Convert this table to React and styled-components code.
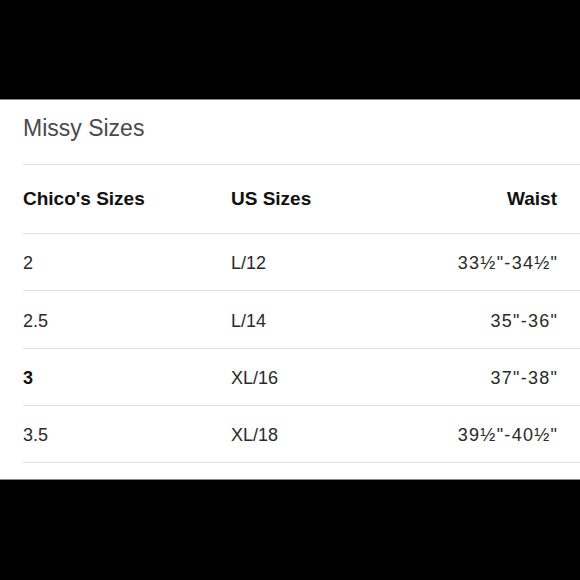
import styled, { createGlobalStyle } from "styled-components";

const GlobalStyle = createGlobalStyle`
  html, body {
    margin: 0;
    padding: 0;
    background: #000;
  }
  body {
    font-family: "Liberation Sans", Arial, sans-serif;
  }
`;

const Page = styled.div`
  width: 580px;
  height: 580px;
  display: flex;
  flex-direction: column;
  background: #000;
`;

const Panel = styled.div`
  margin-top: 99px;
  height: 381px;
  box-sizing: border-box;
  background: #fff;
  border-top: 1px solid #8a8a8a;
  border-bottom: 1px solid #8a8a8a;
  padding-left: 23px;
`;

const Title = styled.div`
  height: 65px;
  box-sizing: border-box;
  display: flex;
  align-items: center;
  padding-bottom: 8px;
  border-bottom: 1px solid #dedede;
  font-size: 23px;
  color: #4a4a4a;
`;

const Row = styled.div`
  display: grid;
  grid-template-columns: 208px 1fr auto;
  align-items: center;
  box-sizing: border-box;
  height: ${(p) => p.$h}px;
  padding-right: 23px;
  padding-top: ${(p) => (p.$head ? 0 : 3)}px;
  border-bottom: 1px solid #dedede;
  font-size: ${(p) => (p.$head ? 19 : 18)}px;
  font-weight: ${(p) => (p.$head ? 700 : 400)};
  color: ${(p) => (p.$head ? "#111" : "#2a2a2a")};
`;

const Cell = styled.div`
  text-align: left;
  font-weight: ${(p) => (p.$bold ? 700 : "inherit")};
  color: ${(p) => (p.$bold ? "#111" : "inherit")};
`;

const Measure = styled.div`
  text-align: right;
  letter-spacing: ${(p) => (p.$head ? 0 : 1.3)}px;
  margin-right: ${(p) => (p.$head ? 0 : -1.3)}px;
`;

const rows = [
  { chico: "2", us: "L/12", waist: "33½\"-34½\"", h: 57 },
  { chico: "2.5", us: "L/14", waist: "35\"-36\"", h: 58 },
  { chico: "3", us: "XL/16", waist: "37\"-38\"", h: 57, bold: true },
  { chico: "3.5", us: "XL/18", waist: "39½\"-40½\"", h: 57 },
];

const App = () => {
  return (
    <>
      <GlobalStyle />
      <Page>
        <Panel>
          <Title>Missy Sizes</Title>
          <Row $head $h={69}>
            <Cell>Chico's Sizes</Cell>
            <Cell>US Sizes</Cell>
            <Measure $head>Waist</Measure>
          </Row>
          {rows.map((r) => (
            <Row key={r.chico} $h={r.h}>
              <Cell $bold={r.bold}>{r.chico}</Cell>
              <Cell>{r.us}</Cell>
              <Measure>{r.waist}</Measure>
            </Row>
          ))}
        </Panel>
      </Page>
    </>
  );
};

export default App;
